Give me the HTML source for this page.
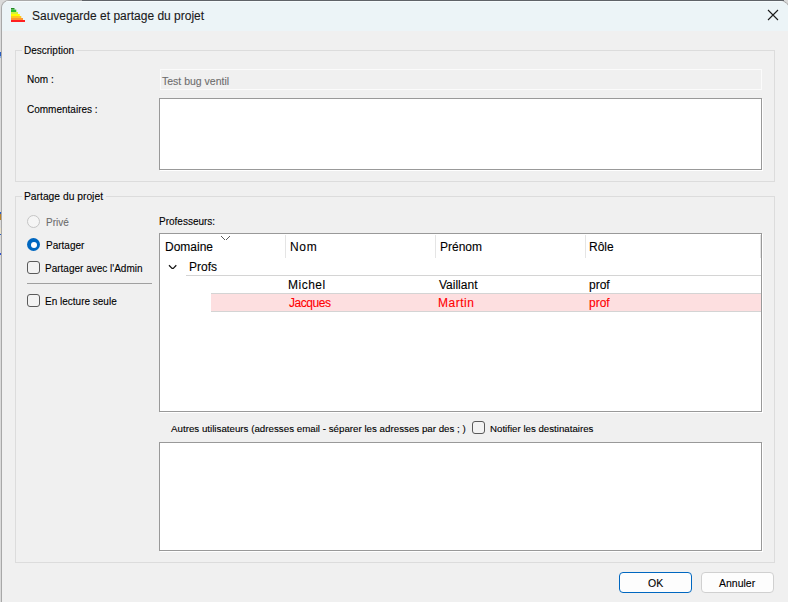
<!DOCTYPE html>
<html><head><meta charset="utf-8">
<style>
html,body{margin:0;padding:0;width:788px;height:602px;overflow:hidden;background:#f0f0f0;}
body{position:relative;font-family:"Liberation Sans",sans-serif;color:#000;}
.a{position:absolute;}
.t{position:absolute;white-space:nowrap;line-height:1;-webkit-text-stroke:0.1px currentColor;}
.s10{font-size:10px;}
.s12{font-size:12px;}
</style></head><body>
<!-- desktop edge -->
<div class="a" style="left:0;top:0;width:788px;height:602px;background:#dadada"></div>
<div class="a" style="left:1px;top:0;width:789px;height:620px;background:#f0f0f0;border-top:1px solid #a9a9a9;border-left:1px solid #a8a8a8;border-right:1px solid #a8a8a8;border-top-left-radius:8px;border-top-right-radius:10px;overflow:hidden;box-sizing:border-box">
  <div class="a" style="left:0;top:0;width:800px;height:30px;background:#ecf4f7;border-top:1px solid #f6fbfd;box-sizing:border-box"></div>
</div>
<div class="a" style="left:0;top:52px;width:1px;height:4px;background:#2a5cc0"></div>
<div class="a" style="left:0;top:56px;width:1px;height:2px;background:#8ab0e0"></div>
<div class="a" style="left:0;top:212px;width:1px;height:2px;background:#2a5cc0"></div>
<div class="a" style="left:0;top:214px;width:1px;height:6px;background:#b8802a"></div>
<div class="a" style="left:0;top:228px;width:1px;height:6px;background:#e8e0c8"></div>
<div class="a" style="left:0;top:234px;width:1px;height:1px;background:#2a5cc0"></div>
<div class="a" style="left:0;top:253px;width:1px;height:2px;background:#3050d0"></div>
<div class="a" style="left:82px;top:0;width:702px;height:1px;background:#5f6368"></div>
<!-- title icon -->
<svg class="a" style="left:10px;top:7px" width="17" height="17" viewBox="0 0 17 17">
  <rect x="1" y="1" width="3.5" height="1.6" fill="#208a20"/>
  <rect x="1" y="2.6" width="5.3" height="2.4" fill="#30c030"/>
  <rect x="1" y="5" width="7" height="2" fill="#d4f040"/>
  <rect x="1" y="7" width="8.8" height="2" fill="#ffff00"/>
  <rect x="1" y="9" width="10.3" height="2" fill="#ffc820"/>
  <rect x="1" y="11" width="12" height="2" fill="#ff9830"/>
  <rect x="1" y="13" width="14" height="2" fill="#ff2020"/>
</svg>
<div class="t s12" style="left:32px;top:10px;color:#1a1a1a">Sauvegarde et partage du projet</div>
<!-- close X -->
<svg class="a" style="left:767px;top:9px" width="12" height="12" viewBox="0 0 12 12">
  <path d="M1 1 L11 11 M11 1 L1 11" stroke="#1a1a1a" stroke-width="1.1" fill="none"/>
</svg>

<!-- Group 1 -->
<div class="a" style="left:15px;top:50px;width:758px;height:130px;border:1px solid #dcdcdc"></div>
<div class="a" style="left:22px;top:45px;width:54px;height:10px;background:#f0f0f0"></div>
<div class="t s10" style="left:24px;top:46px">Description</div>
<div class="t s10" style="left:27px;top:75px">Nom :</div>
<div class="t s10" style="left:27px;top:105px">Commentaires :</div>
<div class="a" style="left:160px;top:69px;width:600px;height:19px;border:1px solid #fbfbfb;background:#f0f0f0"></div>
<div class="t" style="font-size:10.5px;left:162px;top:76px;color:#6d6d6d">Test bug ventil</div>
<div class="a" style="left:159px;top:98px;width:601px;height:70px;border:1px solid #999999;background:#fff;box-shadow:1px 1px 0 #fff"></div>

<!-- Group 2 -->
<div class="a" style="left:15px;top:196px;width:758px;height:365px;border:1px solid #dcdcdc"></div>
<div class="a" style="left:22px;top:190px;width:84px;height:10px;background:#f0f0f0"></div>
<div class="t" style="font-size:10.3px;left:24px;top:192px">Partage du projet</div>

<!-- radios -->
<div class="a" style="left:27px;top:215px;width:11px;height:11px;border-radius:50%;border:1px solid #c5c5c5;background:#f5f5f5"></div>
<div class="t s10" style="left:46px;top:218px;color:#6d6d6d">Privé</div>
<div class="a" style="left:27px;top:238px;width:13px;height:13px;border-radius:50%;background:#0067c0"></div>
<div class="a" style="left:30.5px;top:241.5px;width:6px;height:6px;border-radius:50%;background:#fff"></div>
<div class="t s10" style="left:46px;top:241px">Partager</div>
<div class="a" style="left:27px;top:261px;width:11px;height:11px;border-radius:3px;border:1px solid #5a5a5a;background:#f3f3f3"></div>
<div class="t s10" style="left:45px;top:264px">Partager avec l'Admin</div>
<div class="a" style="left:27px;top:283px;width:125px;height:1px;background:#a0a0a0"></div>
<div class="a" style="left:27px;top:294px;width:11px;height:11px;border-radius:3px;border:1px solid #5a5a5a;background:#f3f3f3"></div>
<div class="t s10" style="left:45px;top:297px">En lecture seule</div>

<!-- professeurs -->
<div class="t s10" style="left:159px;top:217px">Professeurs:</div>
<div class="a" style="left:159px;top:233px;width:601px;height:177px;border:1px solid #999999;background:#fff;box-shadow:1px 1px 0 #fff;overflow:hidden">
  <!-- header separators (coords relative: subtract 160,234) -->
  <div class="a" style="left:125px;top:1px;width:1px;height:23px;background:#e5e5e5"></div>
  <div class="a" style="left:275px;top:1px;width:1px;height:23px;background:#e5e5e5"></div>
  <div class="a" style="left:425px;top:1px;width:1px;height:23px;background:#e5e5e5"></div>
  <div class="a" style="left:600px;top:1px;width:1px;height:23px;background:#e5e5e5"></div>
  <svg class="a" style="left:60px;top:1px" width="12" height="7" viewBox="0 0 12 7" shape-rendering="crispEdges"><g fill="#5a5a5a"><rect x="1" y="1" width="1" height="1"/><rect x="2" y="2" width="1" height="1"/><rect x="3" y="3" width="1" height="1"/><rect x="4" y="4" width="1" height="1"/><rect x="6" y="4" width="1" height="1"/><rect x="7" y="3" width="1" height="1"/><rect x="8" y="2" width="1" height="1"/><rect x="9" y="1" width="1" height="1"/></g></svg>
  <div class="t s12" style="left:5px;top:7px">Domaine</div>
  <div class="t s12" style="left:130px;top:7px;letter-spacing:0.7px">Nom</div>
  <div class="t s12" style="left:280px;top:7px">Prénom</div>
  <div class="t s12" style="left:429px;top:7px">Rôle</div>
  <svg class="a" style="left:8px;top:29px" width="10" height="7" viewBox="0 0 10 7"><path d="M1 2.3 L4 5.4 L5.3 5.4 L8.3 2.3" stroke="#111" stroke-width="1.25" fill="none" stroke-linejoin="round"/></svg>
  <div class="t s12" style="left:29px;top:27px">Profs</div>
  <div class="a" style="left:26px;top:41px;width:580px;height:1px;background:#d4d4d4"></div>
  <div class="t s12" style="left:128px;top:45px;letter-spacing:0.5px">Michel</div>
  <div class="t s12" style="left:279px;top:45px">Vaillant</div>
  <div class="t s12" style="left:429px;top:45px">prof</div>
  <div class="a" style="left:51px;top:59px;width:560px;height:17px;border-top:1px solid #d4d4d4;border-bottom:1px solid #d4d4d4;background:#fddfe0"></div>
  <div class="t s12" style="left:129px;top:63px;color:#ff0000;letter-spacing:-0.45px">Jacques</div>
  <div class="t s12" style="left:278px;top:63px;color:#ff0000;letter-spacing:0.5px">Martin</div>
  <div class="t s12" style="left:429px;top:63px;color:#ff0000">prof</div>
</div>
<div class="t" style="font-size:9.75px;left:171px;top:424px">Autres utilisateurs (adresses email - séparer les adresses par des ; )</div>
<div class="a" style="left:472px;top:421px;width:11px;height:11px;border-radius:3px;border:1px solid #5a5a5a;background:#f3f3f3"></div>
<div class="t" style="font-size:9.7px;left:490px;top:424px">Notifier les destinataires</div>
<div class="a" style="left:159px;top:442px;width:601px;height:107px;border:1px solid #999999;background:#fff;box-shadow:1px 1px 0 #fff"></div>

<!-- buttons -->
<div class="a" style="left:619px;top:572px;width:71px;height:19px;border:1px solid #0067c0;border-radius:4px;background:#fdfdfd"></div>
<div class="t" style="font-size:10.5px;left:648px;top:578px">OK</div>
<div class="a" style="left:701px;top:572px;width:71px;height:19px;border:1px solid #d0d0d0;border-radius:4px;background:#fdfdfd"></div>
<div class="t" style="font-size:10.5px;left:719px;top:578px">Annuler</div>
</body></html>
